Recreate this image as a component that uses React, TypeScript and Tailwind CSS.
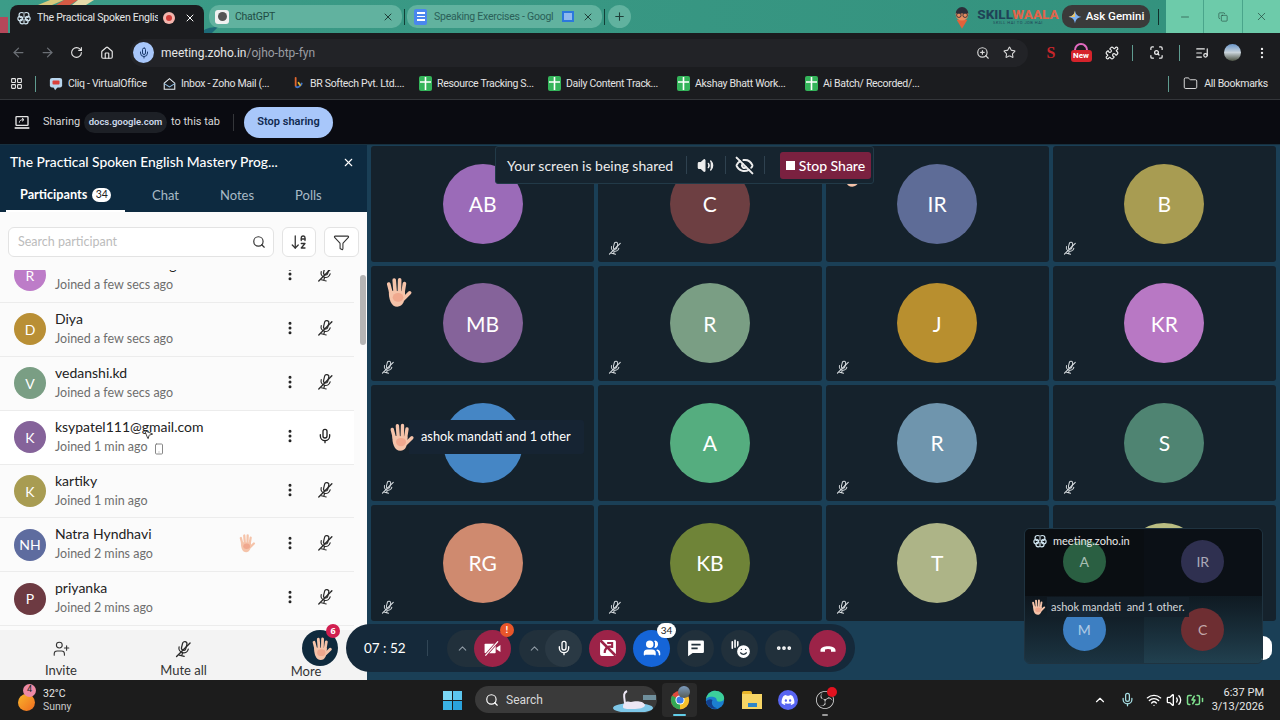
import {
  ArrowLeft,
  ArrowRight,
  RotateCw,
  House,
  Mic,
  ZoomIn,
  Star,
  LayoutGrid,
  Folder,
  X,
  Minus,
  Copy,
  Plus,
  Search,
  Funnel,
  ArrowDownAZ,
  EllipsisVertical,
  UserPlus,
  Volume2,
  EyeOff,
  Users,
  Wifi,
  ChevronUp,
  BatteryCharging,
  Smartphone,
  MousePointer2,
  Ellipsis,
  Smile,
  ListMusic,
  Puzzle,
  ScanSearch,
} from "lucide-react";
import { FaDiscord } from "react-icons/fa";
import { SiObsstudio } from "react-icons/si";

const chromeFont = "font-['Roboto',sans-serif]";
const zohoFont = "font-['Lato',sans-serif]";

const bookmarks = [
  { label: "Cliq - VirtualOffice", kind: "cliq", width: "w-[114px]" },
  { label: "Inbox - Zoho Mail (...", kind: "mail", width: "w-[129px]" },
  { label: "BR Softech Pvt. Ltd....", kind: "br", width: "w-[127px]" },
  { label: "Resource Tracking S...", kind: "sheet", width: "w-[129px]" },
  { label: "Daily Content Track...", kind: "sheet", width: "w-[129px]" },
  { label: "Akshay Bhatt Work...", kind: "sheet", width: "w-[128px]" },
  { label: "Ai Batch/ Recorded/...", kind: "sheet", width: "w-[150px]" },
];

const participants = [
  { name: "Ramesh Kumar Singh", initials: "R", color: "bg-[#bd7cc8]", joined: "Joined a few secs ago" },
  { name: "Diya", initials: "D", color: "bg-[#b98f35]", joined: "Joined a few secs ago" },
  { name: "vedanshi.kd", initials: "V", color: "bg-[#7a9e84]", joined: "Joined a few secs ago" },
  { name: "ksypatel111@gmail.com", initials: "K", color: "bg-[#85639a]", joined: "Joined 1 min ago", live: true },
  { name: "kartiky", initials: "K", color: "bg-[#a89c52]", joined: "Joined 1 min ago" },
  { name: "Natra Hyndhavi", initials: "NH", color: "bg-[#5e6c9f]", joined: "Joined 2 mins ago", hand: true },
  { name: "priyanka", initials: "P", color: "bg-[#6d3a42]", joined: "Joined 2 mins ago" },
];

const tiles = [
  { initials: "AB", color: "bg-[#9b6bb8]" },
  { initials: "C", color: "bg-[#6d3f42]", muted: true },
  { initials: "IR", color: "bg-[#5e6c97]", hand: true },
  { initials: "B", color: "bg-[#a89c52]", muted: true },
  { initials: "MB", color: "bg-[#85639a]", muted: true, hand: true },
  { initials: "R", color: "bg-[#7a9e84]", muted: true },
  { initials: "J", color: "bg-[#b88f2f]", muted: true },
  { initials: "KR", color: "bg-[#b878c4]", muted: true },
  { initials: "", color: "bg-[#4586c5]", muted: true },
  { initials: "A", color: "bg-[#55ad7f]" },
  { initials: "R", color: "bg-[#6f95ad]", muted: true },
  { initials: "S", color: "bg-[#4f8472]", muted: true },
  { initials: "RG", color: "bg-[#cf8a6f]", muted: true },
  { initials: "KB", color: "bg-[#6f8438]", muted: true },
  { initials: "T", color: "bg-[#adb487]", muted: true },
  { initials: "", color: "bg-[#b9bd82]" },
];

function MutedMic({ className = "w-4 h-4", color = "#2a2a2a" }: { className?: string; color?: string }) {
  return (
    <svg viewBox="0 0 24 24" className={className} fill="none" stroke={color} strokeWidth="1.7" strokeLinecap="round">
      <g transform="rotate(14 12 12)">
        <rect x="9" y="2" width="6" height="12" rx="3" />
        <path d="M5.5 11a6.5 6.5 0 0 0 13 0" />
        <path d="M12 17.5V22M8.5 22h7" />
      </g>
      <path d="M2.5 22.5 21 4" strokeWidth="1.9" />
    </svg>
  );
}

function Hand({ className = "w-6 h-6" }: { className?: string }) {
  return (
    <svg viewBox="0 0 24 24" className={className} fill="none" strokeLinecap="round">
      <g stroke="#f5c3a9" strokeWidth="2.7">
        <path d="M7.6 13 5.8 6" />
        <path d="M10.6 12 9.9 3" />
        <path d="M13.8 12 14 2.8" />
        <path d="M16.4 13 17.6 5.6" />
        <path d="M17 17 21.5 12.6" />
      </g>
      <path d="M5.9 11C5.600 17 7.500 23 12.200 23 16.500 23 18.300 18.500 18 11.500Z" fill="#f5c3a9" />
      <ellipse cx="12.800" cy="16" rx="4" ry="3.300" fill="#ee9f85" opacity="0.75" />
    </svg>
  );
}

function ZohoLogo({ className = "w-4 h-4" }: { className?: string }) {
  return (
    <svg viewBox="0 0 24 24" className={className} fill="none" stroke="#cfe3ee" strokeWidth="2">
      <circle cx="8" cy="7" r="4.500" />
      <circle cx="16" cy="7" r="4.500" />
      <circle cx="5.500" cy="13" r="4" />
      <circle cx="18.500" cy="13" r="4" />
      <circle cx="9" cy="18" r="4" />
      <circle cx="15" cy="18" r="4" />
      <path d="M12 3v18" stroke="#1b1c1f" strokeWidth="1.500" />
    </svg>
  );
}

function SheetIcon() {
  return (
    <span className="w-[13px] h-[15px] bg-[#34b45a] rounded-[2px] flex items-center justify-center shrink-0">
      <svg viewBox="0 0 13 15" className="w-[13px] h-[15px]" stroke="#ffffff" strokeWidth="1.600">
        <path d="M1 6h11M6.500 1v13" />
      </svg>
    </span>
  );
}

function BookmarkIcon({ kind }: { kind: string }) {
  if (kind === "sheet") return <SheetIcon />;
  if (kind === "cliq") {
    return (
      <svg viewBox="0 0 16 16" className="w-[14px] h-[14px] shrink-0">
        <rect x="1" y="1" width="14" height="11" rx="2.500" fill="#b9d6ee" />
        <path d="M5 11.500h5L7 15Z" fill="#b9d6ee" />
        <rect x="4" y="4" width="8" height="4.500" rx="1" fill="#d9403c" />
      </svg>
    );
  }
  if (kind === "mail") {
    return (
      <svg viewBox="0 0 16 16" className="w-[13px] h-[14px] shrink-0" fill="none" stroke="#e8eef3" strokeWidth="1.300">
        <path d="M1.500 7 8 1.500 14.500 7v7.500h-13Z" />
        <path d="m1.500 7.500 6.500 4 6.500-4" stroke="#8fc1e8" />
      </svg>
    );
  }
  return (
    <svg viewBox="0 0 16 16" className="w-[13px] h-[15px] shrink-0" fill="none" strokeWidth="2.200" strokeLinecap="round">
      <path d="M4.500 1v10" stroke="#e2672e" />
      <path d="M5 12c2 1.500 5 0 7-4" stroke="#3e73c9" />
      <path d="M8 7l2 3" stroke="#e3b52f" />
    </svg>
  );
}

function ChromeLogo() {
  return (
    <svg viewBox="0 0 24 24" className="w-5 h-5">
      <circle cx="12" cy="12" r="11" fill="#de4a3c" />
      <path d="M12 12 2.500 6.500A11 11 0 0 0 12 23Z" fill="#34a853" />
      <path d="M12 12V23A11 11 0 0 0 21.500 6.500Z" fill="#f6c02c" />
      <circle cx="12" cy="12" r="5.500" fill="#ffffff" />
      <circle cx="12" cy="12" r="4.300" fill="#3f7fe5" />
    </svg>
  );
}

function ControlButton({ children, className }: { children: React.ReactNode; className: string }) {
  return <div className={`w-[37px] h-[37px] rounded-full flex items-center justify-center shrink-0 ${className}`}>{children}</div>;
}

function TabStrip() {
  return (
    <div className="relative h-[33px] bg-gradient-to-r from-[#3c9c88] to-[#33917d] flex items-end overflow-hidden shrink-0">
      <svg viewBox="0 0 240 33" className="absolute left-0 top-0 w-[240px] h-[33px]">
        <path d="M50 0h14L52 5H38Z" fill="#d8c87c" />
        <path d="M64 0h14L70 5H56Z" fill="#d65b45" />
        <path d="M78 0h16L86 5H72Z" fill="#e5d9a8" />
        <path d="M0 17h8v16H0Z" fill="#b5485a" />
        <path d="M200 33c4-4 10-6 18-6l-6 6Z" fill="#1d6a78" />
      </svg>
      <div className="relative w-[194px] h-[28px] ml-[10px] pb-[3px] bg-[#1b1c1f] rounded-t-lg flex items-center pl-[7px] pr-[8px] shrink-0">
        <ZohoLogo className="w-[14px] h-[14px] shrink-0" />
        <span className={`ml-[6px] w-[121px] overflow-hidden whitespace-nowrap text-[10.5px] tracking-[-0.25px] text-[#e6e6e6] ${chromeFont}`}>
          The Practical Spoken Englis
        </span>
        <span className="ml-[5px] w-[12px] h-[12px] rounded-full bg-[#f4b6ae] flex items-center justify-center shrink-0">
          <span className="w-[6px] h-[6px] rounded-full bg-[#d23d3a]" />
        </span>
        <X className="ml-auto w-[12px] h-[12px] text-white" />
      </div>
      <div className="relative w-[193px] h-[23px] ml-[5px] mb-[5px] rounded-[10px] bg-[#61b29f] flex items-center pl-[6px] pr-[8px] shrink-0">
        <span className="w-[14px] h-[14px] rounded-[3px] bg-[#f1f1f1] flex items-center justify-center">
          <span className="w-[9px] h-[9px] rounded-full bg-[#555555]" />
        </span>
        <span className={`ml-[6px] text-[10.5px] tracking-[-0.25px] text-[#1f4c44] ${chromeFont}`}>ChatGPT</span>
        <X className="ml-auto w-[12px] h-[12px] text-[#1f3f39]" />
      </div>
      <div className="relative w-[1px] h-[16px] mx-[2px] mb-[8px] bg-[#123f37] shrink-0" />
      <div className="relative w-[195px] h-[23px] mb-[5px] rounded-[10px] bg-[#61b29f] flex items-center pl-[7px] pr-[8px] shrink-0">
        <span className="w-[13px] h-[16px] rounded-[2px] bg-[#4a87ee] flex flex-col items-center justify-center gap-[2px]">
          <span className="w-[8px] h-[1.5px] bg-white" />
          <span className="w-[8px] h-[1.5px] bg-white" />
          <span className="w-[8px] h-[1.5px] bg-white" />
        </span>
        <span className={`ml-[7px] w-[121px] overflow-hidden whitespace-nowrap text-[10.5px] tracking-[-0.25px] text-[#2a6058] ${chromeFont}`}>
          Speaking Exercises - Googl
        </span>
        <span className="ml-[7px] w-[12px] h-[11px] border-2 border-[#2b78dd] bg-[#8fb9ef]" />
        <X className="ml-auto w-[12px] h-[12px] text-[#1f3f39]" />
      </div>
      <div className="relative w-[1px] h-[16px] mx-[2px] mb-[8px] bg-[#123f37] shrink-0" />
      <div className="relative w-[23px] h-[23px] ml-[1px] mb-[5px] rounded-full bg-[#61b29f] flex items-center justify-center shrink-0">
        <Plus className="w-[13px] h-[13px] text-[#1f3f39]" />
      </div>

      <div className="relative ml-auto h-full flex items-center">
        <svg viewBox="0 0 20 26" className="w-[18px] h-[24px]">
          <path d="M10 26 4 16h12Z" fill="#e2623a" />
          <circle cx="10" cy="10" r="7" fill="#e88d5e" />
          <path d="M3 9a7 7 0 0 1 14 0Z" fill="#2b2f3a" />
          <circle cx="6.500" cy="11" r="2.500" fill="none" stroke="#2b2f3a" />
          <circle cx="13.500" cy="11" r="2.500" fill="none" stroke="#2b2f3a" />
        </svg>
        <div className="ml-[5px] mr-[2px] w-[84px] flex flex-col items-center leading-none">
          <span className={`text-[13.5px] font-extrabold ${chromeFont}`}>
            <span className="text-[#1f4357]">SKILL</span>
            <span className="text-[#e0644a]">WAALA</span>
          </span>
          <span className={`text-[4px] text-[#1f4357] tracking-[0.5px] ${chromeFont}`}>SKILL HAI TO JOB HAI</span>
        </div>
        <div className={`w-[88px] h-[23px] rounded-[10px] bg-[#3a3a3a] flex items-center justify-center gap-[4px] text-[11.5px] font-medium text-white ${chromeFont}`}>
          <svg viewBox="0 0 24 24" className="w-[14px] h-[14px]">
            <path d="M12 1c1 6 4 10 11 11-7 1-10 5-11 11-1-6-4-10-11-11 7-1 10-5 11-11Z" fill="#7db1f5" />
            <path d="M12 12V1c-1 6-4 10-11 11Z" fill="#e8c26a" />
          </svg>
          Ask Gemini
        </div>
        <span className="w-[1px] h-[16px] ml-[8px] bg-[#10302b]" />
        <div className="ml-[7px] w-[114px] h-full bg-[#6dcbaa] flex text-[#1d3a33]">
          <span className="flex-1 flex items-center justify-center border-r border-[#4aa58b]">
            <Minus className="w-[12px] h-[12px]" strokeWidth={1.2} />
          </span>
          <span className="flex-1 flex items-center justify-center border-r border-[#4aa58b]">
            <Copy className="w-[10px] h-[10px]" strokeWidth={1.3} />
          </span>
          <span className="flex-1 flex items-center justify-center">
            <X className="w-[13px] h-[13px]" strokeWidth={1.2} />
          </span>
        </div>
      </div>
    </div>
  );
}

function Toolbar() {
  return (
    <div className="h-[35px] pt-[4px] bg-[#1b1c1f] flex items-center shrink-0">
      <ArrowLeft className="ml-[11px] w-[15px] h-[15px] text-[#6b6f75]" />
      <ArrowRight className="ml-[14px] w-[15px] h-[15px] text-[#6b6f75]" />
      <RotateCw className="ml-[15px] w-[13px] h-[13px] text-[#e6e6e6]" />
      <House className="ml-[17px] w-[14px] h-[14px] text-[#e6e6e6]" />
      <div className="ml-[16px] w-[898px] h-[28px] rounded-full bg-[#222327] flex items-center pr-[12px]">
        <span className="ml-[3px] w-[21px] h-[21px] rounded-full bg-[#a8c7fa] flex items-center justify-center">
          <Mic className="w-[12px] h-[12px] text-[#1c3c6e]" />
        </span>
        <span className={`ml-[7px] text-[12px] text-[#e6e6e6] ${chromeFont}`}>
          meeting.zoho.in<span className="text-[#9a9da3]">/ojho-btp-fyn</span>
        </span>
        <ZoomIn className="ml-auto w-[14px] h-[14px] text-[#d8d8d8]" />
        <Star className="ml-[13px] w-[13px] h-[13px] text-[#d8d8d8]" />
      </div>
      <span className="ml-[16px] w-[14px] text-center text-[16px] font-black leading-none text-[#c8262b] font-['Liberation_Serif',serif]">S</span>
      <div className="ml-[13px] relative w-[20px] h-[22px] flex flex-col items-center">
        <span className="w-[14px] h-[7px] mt-[1px] rounded-t-full border-2 border-b-0 border-[#e26ac0]" />
        <span className={`w-[21px] h-[12px] rounded-[3px] bg-[#d5232b] text-[8px] font-bold text-white text-center leading-[12px] ${chromeFont}`}>New</span>
      </div>
      <Puzzle className="ml-[14px] w-[14px] h-[14px] text-[#eeeeee]" />
      <span className="ml-[13px] w-[1px] h-[16px] bg-[#5f9c90]" />
      <ScanSearch className="ml-[16px] w-[15px] h-[15px] text-[#eeeeee]" />
      <span className="ml-[15px] w-[1px] h-[16px] bg-[#5f9c90]" />
      <ListMusic className="ml-[15px] w-[14px] h-[14px] text-[#eeeeee]" />
      <span className="ml-[15px] w-[17px] h-[17px] rounded-full bg-gradient-to-b from-[#6b97c9] via-[#c9d3da] to-[#4d5345]" />
      <EllipsisVertical className="ml-[14px] w-[14px] h-[14px] text-[#eeeeee]" />
    </div>
  );
}

function BookmarkBar() {
  return (
    <div className={`h-[32px] bg-[#1b1c1f] border-b border-[#34363a] flex items-center shrink-0 text-[10.5px] tracking-[-0.3px] text-[#e3e3e3] ${chromeFont}`}>
      <LayoutGrid className="ml-[10px] w-[13px] h-[13px] text-[#e6e6e6]" />
      <span className="ml-[12px] mr-[13px] w-[1px] h-[16px] bg-[#5f9c90]" />
      {bookmarks.map((b) => (
        <div key={b.label} className={`${b.width} flex items-center gap-[5px] whitespace-nowrap`}>
          <BookmarkIcon kind={b.kind} />
          {b.label}
        </div>
      ))}
      <span className="ml-auto w-[1px] h-[16px] bg-[#5f9c90]" />
      <Folder className="ml-[14px] w-[15px] h-[15px] text-[#e3e3e3]" strokeWidth={1.5} />
      <span className="ml-[6px] mr-[12px]">All Bookmarks</span>
    </div>
  );
}

function SharingBar() {
  return (
    <div className={`h-[45px] bg-[#0a0b11] border-b border-[#17303f] flex items-center shrink-0 text-[11px] text-[#d8d8d8] ${chromeFont}`}>
      <svg viewBox="0 0 24 24" className="ml-[14px] w-[16px] h-[16px]" fill="none" stroke="#e6e6e6" strokeWidth="2">
        <rect x="3" y="4" width="18" height="13" rx="1" />
        <path d="M1 21h22" strokeWidth="2.500" />
        <path d="M8 13c0-3 2-4.500 6-4.500M12 6l3 2.500-3 2.500" strokeWidth="1.500" />
      </svg>
      <span className="ml-[13px] w-[36px] pt-[1px]">Sharing</span>
      <span className="ml-[5px] h-[21px] w-[83px] rounded-full bg-[#1d2026] text-[9.5px] font-semibold text-[#cdd9ea] flex items-center justify-center">docs.google.com</span>
      <span className="ml-[4px] w-[49px] whitespace-nowrap pt-[1px]">to this tab</span>
      <span className="ml-[13px] w-[1px] h-[17px] bg-[#34363a]" />
      <span className="ml-[10px] w-[89px] h-[31px] rounded-full bg-[#a8c7fa] text-[11px] font-semibold text-[#102a50] flex items-center justify-center">Stop sharing</span>
    </div>
  );
}

function Sidebar() {
  return (
    <aside className={`w-[367px] shrink-0 bg-[#fbfbfb] flex flex-col ${zohoFont}`}>
      <div className="h-[67px] bg-[#0d2a40] shrink-0 flex flex-col">
        <div className="h-[35px] pl-[10px] pr-[12px] flex items-center justify-between text-white">
          <span className="text-[13.8px] font-medium">The Practical Spoken English Mastery Prog...</span>
          <X className="w-[13px] h-[13px]" />
        </div>
        <div className="flex-1 flex text-[13px] text-[#a9bac6]">
          <div className="w-[119px] ml-[6px] border-b-2 border-white flex items-center pl-[14px] text-[12.7px] text-white font-bold gap-[5px]">
            Participants
            <span className="w-[19px] h-[14px] rounded-full bg-white text-[10.5px] font-normal text-[#222222] flex items-center justify-center">34</span>
          </div>
          <span className="ml-[27px] pt-[6px]">Chat</span>
          <span className="ml-[41px] pt-[6px]">Notes</span>
          <span className="ml-[41px] pt-[6px]">Polls</span>
        </div>
      </div>

      <div className="h-[58px] shrink-0 pl-[8px] pr-[8px] pt-[15px] flex gap-[8px]">
        <div className="w-[267px] h-[30px] border border-[#e3e3e3] rounded-md bg-white flex items-center pl-[9px] pr-[7px] text-[12.5px] text-[#bcbcbc]">
          Search participant
          <Search className="ml-auto w-[14px] h-[14px] text-[#333333]" />
        </div>
        <div className="w-[34px] h-[30px] border border-[#e3e3e3] rounded-md bg-white flex items-center justify-center">
          <ArrowDownAZ className="w-[18px] h-[18px] text-[#333333]" strokeWidth={1.7} />
        </div>
        <div className="w-[35px] h-[30px] border border-[#e3e3e3] rounded-md bg-white flex items-center justify-center">
          <Funnel className="w-[17px] h-[17px] text-[#333333]" strokeWidth={1.5} />
        </div>
      </div>

      <div className="relative flex-1 overflow-hidden">
        <div className="mt-[-21px]">
          {participants.map((p) => (
            <div key={p.name} className={`relative h-[53.9px] w-[354px] border-b border-[#ececec] flex items-center pl-[14px] ${p.live ? "bg-white" : ""}`}>
              <span className={`w-[32px] h-[32px] rounded-full ${p.color} text-white text-[14px] flex items-center justify-center shrink-0`}>{p.initials}</span>
              <div className="ml-[9px] mt-[-2px] flex flex-col">
                <span className="text-[14px] leading-[19px] mb-[2px] text-[#222222] whitespace-nowrap">{p.name}</span>
                <span className="text-[12.5px] leading-[18px] text-[#6e6e6e] whitespace-nowrap">{p.joined}</span>
              </div>
              {p.hand && <Hand className="absolute left-[236px] top-[15px] w-[20px] h-[20px]" />}
              <EllipsisVertical className="absolute left-[282px] top-[17px] w-[16px] h-[16px] text-[#222222]" strokeWidth={2.5} />
              {p.live ? (
                <Mic className="absolute left-[317px] top-[17px] w-[16px] h-[16px] text-[#222222]" />
              ) : (
                <MutedMic className="absolute left-[317px] top-[16px] w-[17px] h-[17px]" />
              )}
              {p.live && (
                <>
                  <MousePointer2 className="absolute left-[143px] top-[18px] w-[11px] h-[11px] text-[#333333] fill-white" />
                  <Smartphone className="absolute left-[153px] top-[32px] w-[12px] h-[12px] text-[#888888]" />
                </>
              )}
            </div>
          ))}
        </div>
        <div className="absolute right-[1px] top-[5px] w-[6px] h-[70px] rounded-full bg-[#b5b5b5]" />
      </div>

      <div className="h-[50px] shrink-0 bg-[#f3f3f3] flex text-[13px] text-[#333333]">
        <div className="w-[122px] flex flex-col items-center pt-[10px] gap-[3px]">
          <UserPlus className="w-[19px] h-[19px]" strokeWidth={1.5} />
          Invite
        </div>
        <div className="w-[123px] flex flex-col items-center pt-[10px] gap-[3px]">
          <MutedMic className="w-[19px] h-[19px]" />
          Mute all
        </div>
        <div className="w-[122px] flex flex-col items-center pt-[32px]">More</div>
      </div>
    </aside>
  );
}

function MeetingGrid() {
  return (
    <div className={`flex-1 relative bg-[#1a3f56] overflow-hidden ${zohoFont}`}>
      <div className="ml-[4px] mr-[4px] mt-[1px] grid grid-cols-4 gap-[4px] auto-rows-[115.67px]">
        {tiles.map((t, i) => (
          <div key={i} className="relative rounded-[3px] bg-[#15222c] flex items-center justify-center">
            <span className={`w-[80px] h-[80px] rounded-full ${t.color} text-white text-[21px] flex items-center justify-center`}>{t.initials}</span>
            {t.hand && <Hand className="absolute left-[10px] top-[10px] w-[32px] h-[32px]" />}
            {t.muted && <MutedMic className="absolute left-[10px] bottom-[7px] w-[14px] h-[14px]" color="#d8dde0" />}
          </div>
        ))}
      </div>
    </div>
  );
}

function ShareBanner() {
  return (
    <div className={`absolute left-[495px] top-[146px] w-[379px] h-[38px] rounded-[3px] bg-[#16242f] border border-[#223a48] flex items-center text-white ${zohoFont}`}>
      <span className="ml-[11px] w-[164px] whitespace-nowrap text-[14px] text-[#ececec] shrink-0">Your screen is being shared</span>
      <span className="ml-[15px] w-[1px] h-[18px] bg-[#2f4250] shrink-0" />
      <Volume2 className="ml-[10px] w-[17px] h-[17px] text-[#ececec] shrink-0" fill="#ececec" />
      <span className="ml-[11px] w-[1px] h-[18px] bg-[#2f4250] shrink-0" />
      <EyeOff className="ml-[9px] w-[19px] h-[19px] text-[#ececec] shrink-0" strokeWidth={2.5} />
      <span className="ml-[10px] w-[1px] h-[18px] bg-[#2f4250] shrink-0" />
      <span className="ml-[15px] w-[91px] h-[27px] rounded-[3px] bg-[#7a2140] flex items-center justify-center gap-[4px] text-[14px] font-medium whitespace-nowrap shrink-0">
        <span className="w-[9px] h-[9px] bg-white" />
        Stop Share
      </span>
    </div>
  );
}

function ControlBar() {
  return (
    <div className={`absolute left-[346px] top-[624px] w-[509px] h-[48px] rounded-full bg-[#15293a] flex items-center ${zohoFont}`}>
      <span className="ml-[18px] w-[40px] whitespace-nowrap text-[13.5px] text-white">07 : 52</span>
      <span className="ml-[23px] w-[1px] h-[16px] bg-[#314656]" />
      <div className="ml-[19px] w-[64px] h-[37px] rounded-full bg-[#21303b] flex items-center">
        <ChevronUp className="ml-[9px] w-[13px] h-[13px] text-[#8f9ba4]" />
        <ControlButton className="ml-auto bg-[#9c2348] relative">
          <svg viewBox="0 0 24 24" className="w-[19px] h-[19px]" fill="#ffffff">
            <rect x="2" y="6" width="14" height="12" rx="1" />
            <path d="m17 11 5-3.500v9l-5-3.500Z" />
            <path d="M3 21 19 3" stroke="#9c2348" strokeWidth="3.500" />
            <path d="M3 21 19 3" stroke="#ffffff" strokeWidth="1.500" />
          </svg>
          <span className="absolute right-[-3px] top-[-7px] w-[14px] h-[14px] rounded-full bg-[#e8562a] text-[10px] font-bold text-white flex items-center justify-center">!</span>
        </ControlButton>
      </div>
      <div className="ml-[8px] w-[63px] h-[37px] rounded-full bg-[#21303b] flex items-center">
        <ChevronUp className="ml-[9px] w-[13px] h-[13px] text-[#8f9ba4]" />
        <ControlButton className="ml-auto bg-[#2a3944]">
          <Mic className="w-[16px] h-[16px] text-white" />
        </ControlButton>
      </div>
      <ControlButton className="ml-[7px] bg-[#9c2348]">
        <svg viewBox="0 0 24 24" className="w-[20px] h-[20px]" fill="none" stroke="#ffffff" strokeWidth="2">
          <rect x="3.500" y="3.500" width="17" height="17" rx="1" fill="#ffffff" />
          <path d="M8 18c0-5 3-8 8-8M11 6h6v6" stroke="#9c2348" strokeWidth="2.500" />
          <path d="M3 3l18 18" stroke="#9c2348" strokeWidth="3" />
        </svg>
      </ControlButton>
      <ControlButton className="ml-[7px] bg-[#1565d8] relative">
        <Users className="w-[18px] h-[18px] text-white" fill="#ffffff" />
        <span className="absolute right-[-6px] top-[-7px] w-[19px] h-[15px] rounded-full bg-white text-[10px] text-[#222222] flex items-center justify-center">34</span>
      </ControlButton>
      <ControlButton className="ml-[7px] bg-[#21303b]">
        <svg viewBox="0 0 24 24" className="w-[20px] h-[20px]">
          <path d="M4 3h16a1.500 1.500 0 0 1 1.500 1.500v12A1.500 1.500 0 0 1 20 18H8l-5.500 4V4.500A1.500 1.500 0 0 1 4 3Z" fill="#ffffff" />
          <path d="M6.500 8h11M6.500 12.500h7.500" stroke="#21303b" strokeWidth="2" />
        </svg>
      </ControlButton>
      <ControlButton className="ml-[7px] bg-[#21303b] relative">
        <svg viewBox="0 0 24 24" className="absolute left-[9px] top-[8px] w-[11px] h-[13px]" stroke="#ffffff" strokeWidth="3.500" strokeLinecap="round">
          <path d="M5 20V6M11 18V3M17 18V6" />
        </svg>
        <Smile className="absolute left-[14px] top-[13px] w-[17px] h-[17px] text-[#21303b]" fill="#ffffff" strokeWidth={2} />
      </ControlButton>
      <ControlButton className="ml-[7px] bg-[#21303b]">
        <Ellipsis className="w-[18px] h-[18px] text-white" strokeWidth={3} />
      </ControlButton>
      <ControlButton className="ml-[7px] bg-[#9c2348]">
        <svg viewBox="0 0 24 24" className="w-[18px] h-[18px]" fill="#ffffff">
          <path d="M2 15c0-7 20-7 20 0v2h-6v-3c-2-1-6-1-8 0v3H2Z" />
        </svg>
      </ControlButton>
    </div>
  );
}

function PipWindow() {
  const cells = [
    { initials: "A", color: "bg-[#2a5f42]", cell: "bg-[#0a0e12]" },
    { initials: "IR", color: "bg-[#2f3050]", cell: "bg-[#0b1016]" },
    { initials: "M", color: "bg-[#3d7fc2]", cell: "bg-gradient-to-b from-[#0e161d] to-[#1b3442]" },
    { initials: "C", color: "bg-[#6e2e32]", cell: "bg-gradient-to-b from-[#0f1a22] to-[#21404f]" },
  ];
  return (
    <div className={`absolute left-[1024px] top-[528px] w-[239px] h-[136px] rounded-md border border-[#1f3340] overflow-hidden grid grid-cols-2 grid-rows-2 ${zohoFont}`}>
      {cells.map((c, i) => (
        <div key={c.initials} className={`${c.cell} flex items-center justify-center ${i < 2 ? "pb-[2px]" : ""}`}>
          <span className={`w-[43px] h-[43px] rounded-full ${c.color} text-[14px] text-white/60 flex items-center justify-center`}>{c.initials}</span>
        </div>
      ))}
      <div className="absolute left-[8px] top-[4px] flex items-center gap-[6px] text-[11px] text-[#e8e8e8]">
        <ZohoLogo className="w-[14px] h-[14px]" />
        meeting.zoho.in
      </div>
      <div className="absolute left-[4px] top-[68px] flex items-center">
        <Hand className="w-[17px] h-[20px]" />
        <span className="ml-[1px] h-[20px] px-[4px] bg-[#14202a]/90 text-[11px] text-[#d5d8da] flex items-center whitespace-nowrap">ashok mandati&nbsp; and 1 other.</span>
      </div>
    </div>
  );
}

function Taskbar() {
  return (
    <div className={`h-[40px] bg-[#1c1c1c] flex items-center shrink-0 relative text-[#e8e8e8] ${chromeFont}`}>
      <div className="relative ml-[18px] w-[17px] h-[17px] mt-[4px] rounded-full bg-gradient-to-br from-[#f8b42c] to-[#ee6a1f]">
        <span className="absolute left-[5px] top-[-10px] w-[13px] h-[13px] rounded-full bg-[#ee8aa5] text-[9px] text-[#222222] flex items-center justify-center">4</span>
      </div>
      <div className="ml-[8px] flex flex-col text-[10.5px] leading-[13px]">
        <span>32°C</span>
        <span className="text-[#c8c8c8]">Sunny</span>
      </div>

      <div className="absolute left-[443px] top-[11px] w-[19px] h-[19px] grid grid-cols-2 gap-[1px]">
        <span className="bg-[#7bd8f5]" />
        <span className="bg-[#5cc6ef]" />
        <span className="bg-[#3bb3e6]" />
        <span className="bg-[#2aa2dc]" />
      </div>
      <div className="absolute left-[475px] top-[6px] w-[182px] h-[27px] rounded-full bg-[#3a3a3a] flex items-center overflow-hidden">
        <Search className="ml-[10px] w-[14px] h-[14px] text-white" />
        <span className="ml-[7px] text-[12px] text-[#d8d8d8]">Search</span>
        <svg viewBox="0 0 44 24" className="ml-auto w-[44px] h-[24px]">
          <ellipse cx="20" cy="20" rx="20" ry="5" fill="#7ec7e8" />
          <path d="M10 19c0-6 5-6 8-5 3-1 12-2 14 3 0 3-6 4-12 4s-10 0-10-2Z" fill="#ece6f4" />
          <path d="M12 15C11 8 10 5 14 3" stroke="#ece6f4" strokeWidth="2" fill="none" />
          <path d="M30 7h13v5H30Z" fill="#6f8f9c" />
        </svg>
      </div>
      <div className="absolute left-[662px] top-[3px] w-[35px] h-[34px] rounded-[4px] bg-[#2a2a2a] flex items-center justify-center">
        <ChromeLogo />
        <span className="absolute left-[16px] top-[3px] w-[12px] h-[12px] rounded-full bg-gradient-to-b from-[#7c9cc0] to-[#565c55]" />
        <span className="absolute left-[11px] bottom-[1px] w-[13px] h-[2px] rounded-full bg-[#62cde8]" />
      </div>
      <svg viewBox="0 0 24 24" className="absolute left-[705px] top-[10px] w-[20px] h-[20px]">
        <circle cx="12" cy="12" r="11" fill="#1c7fd0" />
        <path d="M1 12C2 4 8 1 12 1c6 0 11 4 11 9 0 3-3 4-6 4-2 0-3-1-3-2 0-3-3-4-6-4-4 0-7 2-7 4Z" fill="#3ccf9b" />
        <path d="M9 12c-2 4 0 9 6 10-6 2-12-2-14-8 2-3 6-4 8-2Z" fill="#123f8c" />
      </svg>
      <div className="absolute left-[742px] top-[11px] w-[20px] h-[18px]">
        <span className="block w-[10px] h-[3px] rounded-t-[2px] bg-[#e8b52b]" />
        <span className="relative flex justify-center w-[20px] h-[15px] bg-[#f7d565]">
          <span className="absolute bottom-[2px] w-[9px] h-[4px] bg-[#2f86c9]" />
        </span>
      </div>
      <span className="absolute left-[778px] top-[10px] w-[20px] h-[20px] rounded-full bg-[#5865f2] flex items-center justify-center">
        <FaDiscord className="w-[14px] h-[14px] text-white" />
      </span>
      <div className="absolute left-[816px] top-[11px] w-[18px] h-[18px]">
        <SiObsstudio className="w-[18px] h-[18px] text-[#d8d8d8]" />
        <span className="absolute right-[-3px] top-[-4px] w-[10px] h-[10px] rounded-full bg-[#e2121f]" />
        <span className="absolute left-[6px] bottom-[-7px] w-[6px] h-[2px] rounded-full bg-[#9a9a9a]" />
      </div>

      <ChevronUp className="absolute left-[1093px] top-[13px] w-[14px] h-[14px] text-white" />
      <Mic className="absolute left-[1120px] top-[12px] w-[15px] h-[15px] text-[#a7dfe4]" />
      <Wifi className="absolute left-[1146px] top-[12px] w-[16px] h-[16px] text-white" />
      <Volume2 className="absolute left-[1166px] top-[12px] w-[16px] h-[16px] text-white" />
      <BatteryCharging className="absolute left-[1186px] top-[11px] w-[18px] h-[18px] text-[#7ee08d]" />
      <div className="ml-auto mr-[16px] flex flex-col items-end text-[11px] leading-[14px]">
        <span>6:37 PM</span>
        <span>3/13/2026</span>
      </div>
    </div>
  );
}

export default function App() {
  return (
    <div className="relative w-[1280px] h-[720px] overflow-hidden flex flex-col bg-[#1b1c1f]">
      <TabStrip />
      <Toolbar />
      <BookmarkBar />
      <SharingBar />
      <main className="flex-1 flex min-h-0">
        <Sidebar />
        <MeetingGrid />
      </main>
      <Taskbar />

      <ShareBanner />
      <div className={`absolute left-[385px] top-[420px] flex items-center h-[34px] ${zohoFont}`}>
        <Hand className="relative z-10 w-[30px] h-[36px]" />
        <span className="ml-[-6px] w-[175px] h-[34px] pl-[12px] bg-[#162433] text-[12.8px] text-white flex items-center rounded-r-[3px]">ashok mandati and 1 other</span>
      </div>
      <div className="absolute left-[302px] top-[630px] w-[36px] h-[36px] rounded-full bg-[#0f2a3d] flex items-center justify-center">
        <Hand className="w-[25px] h-[25px]" />
        <span className="absolute right-[-2px] top-[-6px] w-[14px] h-[14px] rounded-full bg-[#d11f50] text-[9px] font-bold text-white flex items-center justify-center">6</span>
      </div>
      <ControlBar />
      <span className="absolute left-[1254px] top-[636px] w-[18px] h-[24px] rounded-full bg-white" />
      <PipWindow />
    </div>
  );
}
